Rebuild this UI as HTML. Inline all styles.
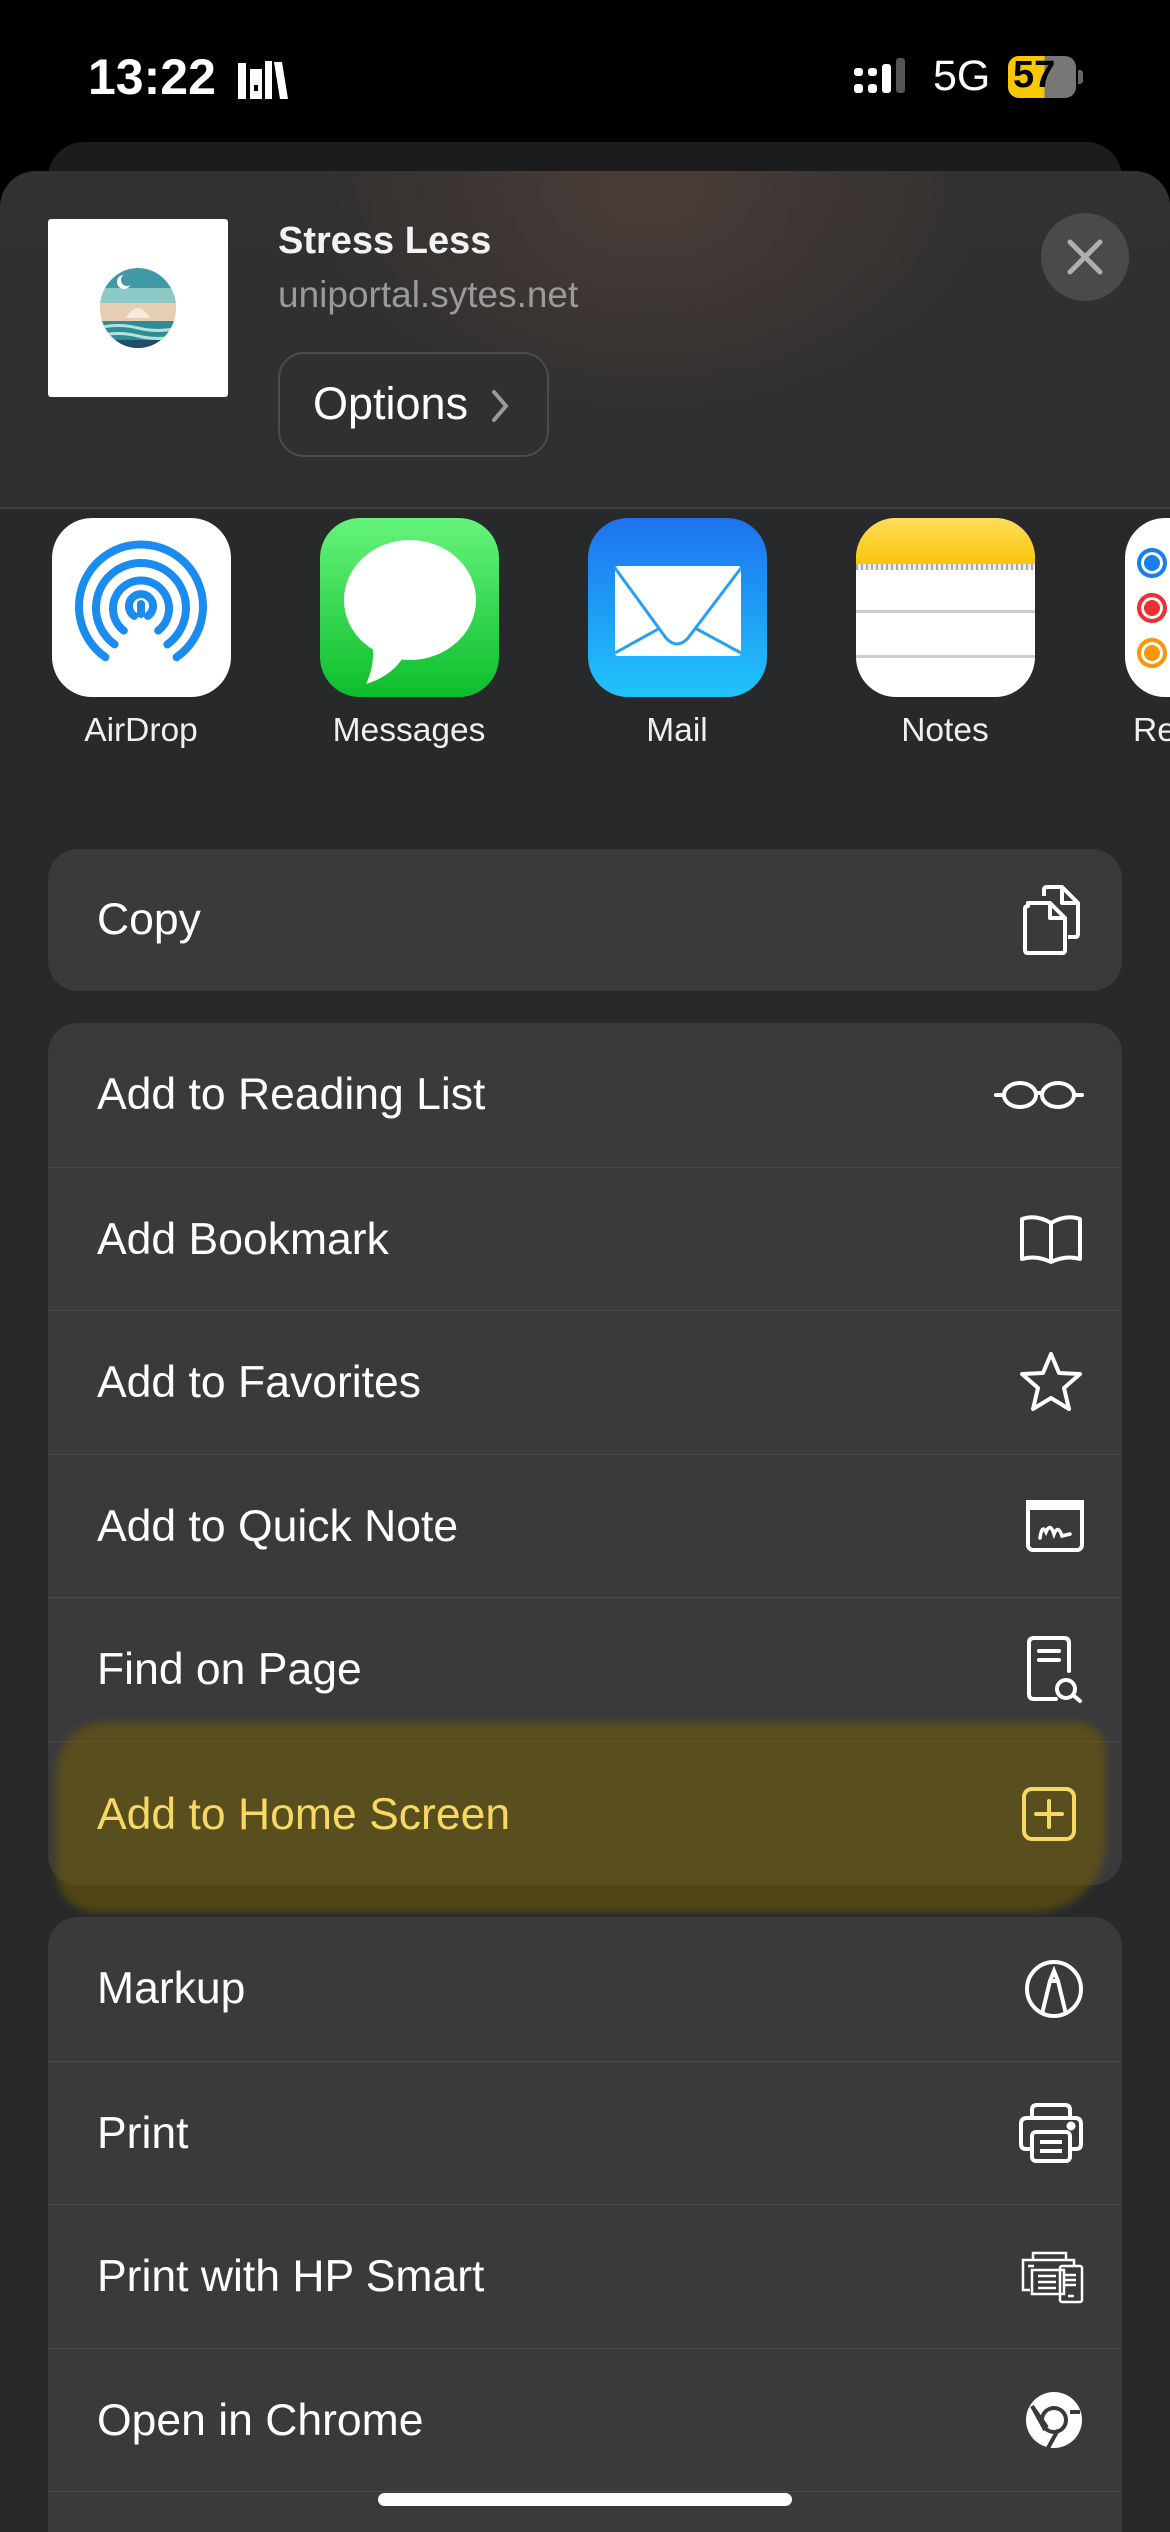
<!DOCTYPE html>
<html><head><meta charset="utf-8"><style>
*{margin:0;padding:0;box-sizing:border-box}
html{width:1170px;height:2532px;overflow:hidden}
body{width:1170px;height:2532px;background:#000;font-family:"Liberation Sans",sans-serif;position:relative;overflow:hidden;color:#fff}
.abs{position:absolute}
.status{top:48px;font-size:50px;font-weight:600;}
.back{left:48px;top:142px;width:1074px;height:80px;background:#1c1c1e;border-radius:36px}
.sheet{left:0;top:171px;width:1170px;height:2361px;border-radius:36px 36px 0 0;background:#28292a}
.hdr{left:0;top:171px;width:1170px;height:337px;background:linear-gradient(#323130,#2e2f2f);border-radius:36px 36px 0 0}
.glow{left:0;top:171px;width:1170px;height:337px;border-radius:36px 36px 0 0;background:radial-gradient(ellipse 330px 230px at 650px 20px,rgba(95,70,62,.55),rgba(0,0,0,0) 100%)}
.group{left:48px;width:1074px;background:#3a3a3c;border-radius:30px;overflow:hidden}
.row{height:143.6px;position:relative;border-top:1px solid #4a4a4c;font-size:44.5px;line-height:143px;padding-left:49px}
.row:first-child{border-top:none}
.row svg{position:absolute;right:38px;top:50%;transform:translateY(-50%)}
.lbl{font-size:33.5px;color:#f0f0f0;text-align:center;width:240px}
.app{width:179px;height:179px;border-radius:40px;overflow:hidden}
</style></head><body>
<div class="abs status" style="left:88px">13:22</div>
<svg class="abs" style="left:236px;top:59px" width="52" height="40" viewBox="0 0 52 40"><rect x="2" y="4" width="8" height="36" fill="#fff"/><rect x="14" y="10" width="12" height="30" fill="#fff"/><rect x="18" y="26" width="4" height="6" fill="#000"/><rect x="29" y="2" width="7" height="38" fill="#fff"/><path d="M38 3 L46 3 L52 40 L44 40Z" fill="#fff"/></svg>
<svg class="abs" style="left:854px;top:58px" width="60" height="42" viewBox="0 0 60 42"><rect x="0" y="10" width="9" height="8" rx="3" fill="#fff"/><rect x="0" y="26" width="9" height="9" rx="3" fill="#fff"/><rect x="14" y="10" width="9" height="8" rx="3" fill="#fff"/><rect x="14" y="26" width="9" height="9" rx="3" fill="#fff"/><rect x="28" y="6" width="9" height="29" rx="3" fill="#fff"/><rect x="42" y="0" width="9" height="35" rx="3" fill="#555"/></svg>
<div class="abs" style="left:933px;top:52px;font-size:43px;font-weight:500">5G</div>
<div class="abs" style="left:1008px;top:56px;width:68px;height:42px;border-radius:11px;background:linear-gradient(90deg,#f7c800 0 54%,#777 54%);"></div>
<div class="abs" style="left:1078px;top:70px;width:5px;height:14px;border-radius:0 3px 3px 0;background:#666"></div>
<div class="abs" style="left:1013px;top:54px;font-size:38px;font-weight:700;color:#000">57</div>
<div class="abs back"></div>
<div class="abs sheet"></div>
<div class="abs hdr"></div>
<div class="abs glow"></div>
<div class="abs" style="left:0;top:507px;width:1170px;height:2px;background:#3b3b3c"></div>
<div class="abs" style="left:48px;top:219px;width:180px;height:178px;background:#fff;border-radius:3px"></div>
<svg class="abs" style="left:98px;top:268px" width="80" height="80" viewBox="0 0 80 80"><defs><clipPath id="c"><ellipse cx="40" cy="40" rx="38" ry="40"/></clipPath></defs><g clip-path="url(#c)"><rect width="80" height="40" fill="#3f9aa6"/><rect y="20" width="80" height="15" fill="#8cc9c7"/><rect y="35" width="80" height="18" fill="#e8cdb5"/><rect y="53" width="80" height="27" fill="#2f8b94"/><path d="M0 60 Q20 55 40 60 T80 60 M0 68 Q20 63 40 68 T80 68" stroke="#b5e0dc" stroke-width="3" fill="none"/><rect y="72" width="80" height="8" fill="#1e4e6b"/><path d="M28 50 Q40 30 52 50Z" fill="#f7e9dc"/><circle cx="26" cy="14" r="7" fill="#fff"/><circle cx="29" cy="12" r="6" fill="#3f9aa6"/></g></svg>
<div class="abs" style="left:278px;top:220px;font-size:38px;font-weight:700;color:#f2f2f2">Stress Less</div>
<div class="abs" style="left:278px;top:274px;font-size:37px;color:#9a9a9a">uniportal.sytes.net</div>
<div class="abs" style="left:278px;top:352px;width:271px;height:105px;border:2px solid #4c4c4c;border-radius:26px;background:#2f302f"></div>
<div class="abs" style="left:313px;top:378px;font-size:45px;color:#fff">Options</div>
<svg class="abs" style="left:490px;top:389px" width="20" height="34" viewBox="0 0 20 34"><path d="M4 3 L16 17 L4 31" stroke="#9a9a9a" stroke-width="4" fill="none" stroke-linecap="round"/></svg>
<div class="abs" style="left:1041px;top:213px;width:88px;height:88px;border-radius:50%;background:#4a4a4a"></div>
<svg class="abs" style="left:1065px;top:237px" width="40" height="40" viewBox="0 0 40 40"><path d="M5 5L35 35M35 5L5 35" stroke="#b0b0b0" stroke-width="5" stroke-linecap="round"/></svg>

<!-- apps -->
<div class="abs app" style="left:52px;top:518px;background:#fff"><svg width="179" height="179" viewBox="0 0 179 179" fill="none" stroke="#1a8cf0" stroke-width="8" stroke-linecap="round">
<path d="M82.1 97.9 A12 12 0 1 1 95.9 97.9"/>
<path d="M71.8 112.6 A28 28 0 1 1 106.2 112.6"/>
<path d="M62.6 126.4 A45 45 0 1 1 115.4 126.4"/>
<path d="M53.4 139.2 A62 62 0 1 1 124.6 139.2"/>
<path d="M89 86 L89 96"/></svg></div>
<div class="abs app" style="left:320px;top:518px;background:linear-gradient(#66f47b,#0dbd2c)"><svg width="179" height="179" viewBox="0 0 179 179"><ellipse cx="90" cy="82" rx="66" ry="60" fill="#fff"/><path d="M52 120 Q56 145 46 166 Q72 158 84 138Z" fill="#fff"/></svg></div>
<div class="abs app" style="left:588px;top:518px;background:linear-gradient(#1e72ee,#1fc4fb)"><svg width="179" height="179" viewBox="0 0 179 179"><rect x="27" y="48" width="126" height="90" rx="3" fill="#fff"/><path d="M27 50 L78 120 Q89 132 100 120 L153 50 M27 135 L72 110 M153 135 L107 110" stroke="#25a0f4" stroke-width="3" fill="none"/></svg></div>
<div class="abs app" style="left:856px;top:518px;background:#fff"><div style="height:46px;background:linear-gradient(#fedd5a,#fcc50b)"></div><div style="height:6px;background:repeating-linear-gradient(90deg,#aaa 0 2px,#eee 2px 5px)"></div><div style="position:absolute;top:92px;left:0;width:179px;height:3px;background:#ccc"></div><div style="position:absolute;top:137px;left:0;width:179px;height:3px;background:#ccc"></div></div>
<div class="abs app" style="left:1125px;top:518px;background:#fff"><div style="position:absolute;left:12px;top:30px;width:30px;height:30px;border-radius:50%;border:4px solid #1a7ff0;background:#1a7ff0;box-shadow:inset 0 0 0 3px #fff"></div><div style="position:absolute;left:12px;top:75px;width:30px;height:30px;border-radius:50%;border:4px solid #f03030;background:#f03030;box-shadow:inset 0 0 0 3px #fff"></div><div style="position:absolute;left:12px;top:120px;width:30px;height:30px;border-radius:50%;border:4px solid #f7980a;background:#f7980a;box-shadow:inset 0 0 0 3px #fff"></div></div>
<div class="abs lbl" style="left:21px;top:712px">AirDrop</div>
<div class="abs lbl" style="left:289px;top:712px">Messages</div>
<div class="abs lbl" style="left:557px;top:712px">Mail</div>
<div class="abs lbl" style="left:825px;top:712px">Notes</div>
<div class="abs lbl" style="left:1104px;top:712px;text-align:left;padding-left:29px">Re</div>

<div class="abs group" style="top:849px;height:142px"><div class="row" style="height:142px;line-height:142px">Copy<svg width="62" height="72" viewBox="0 0 62 72" fill="none" stroke="#fff" stroke-width="4" stroke-linejoin="round"><path d="M22 12 V6 Q22 3 25 3 H40 L56 19 V50 Q56 53 53 53 H46"/><path d="M40 3 V19 H56"/><path d="M6 22 Q3 22 3 25 V66 Q3 69 6 69 H40 Q43 69 43 66 V34 L28 19 H6Z"/><path d="M28 19 V34 H43"/></svg></div></div>

<div class="abs group" style="top:1023px;height:862px">
<div class="row">Add to Reading List<svg width="90" height="30" viewBox="0 0 90 30" fill="none" stroke="#fff" stroke-width="4"><ellipse cx="26" cy="15" rx="16" ry="12"/><ellipse cx="64" cy="15" rx="16" ry="12"/><path d="M42 13 H48 M2 15 H10 M80 15 H88" stroke-linecap="round"/></svg></div>
<div class="row">Add Bookmark<svg width="66" height="52" viewBox="0 0 66 52" fill="none" stroke="#fff" stroke-width="4" stroke-linejoin="round"><path d="M33 10 Q18 1 4 6 V46 Q18 42 33 49 Q48 42 62 46 V6 Q48 1 33 10 V49"/></svg></div>
<div class="row">Add to Favorites<svg width="66" height="62" viewBox="0 0 66 62" fill="none" stroke="#fff" stroke-width="4" stroke-linejoin="round"><path d="M33 3 L41 22 L62 23 L46 37 L51 58 L33 47 L15 58 L20 37 L4 23 L25 22Z"/></svg></div>
<div class="row">Add to Quick Note<svg width="58" height="52" viewBox="0 0 58 52" fill="none" stroke="#fff" stroke-width="4"><rect x="2" y="2" width="54" height="48" rx="5"/><rect x="2" y="2" width="54" height="6" fill="#fff"/><path d="M14 38 Q16 24 20 32 Q24 22 28 34 Q32 24 36 36 L44 34" stroke-width="3.5" stroke-linecap="round"/></svg></div>
<div class="row">Find on Page<svg width="58" height="70" viewBox="0 0 58 70" fill="none" stroke="#fff" stroke-width="4" stroke-linecap="round"><path d="M30 64 H8 Q3 64 3 59 V8 Q3 3 8 3 H38 Q43 3 43 8 V36"/><path d="M13 16 H33 M13 25 H33"/><circle cx="40" cy="54" r="9"/><path d="M47 60 L54 66"/></svg></div>
<div class="row"></div>
</div>
<!-- highlight -->
<div class="abs" style="left:56px;top:1722px;width:1050px;height:190px;background:rgba(118,98,0,.5);border-radius:50px 30px 70px 40px;filter:blur(4px)"></div>
<div class="abs" style="left:97px;top:1790px;font-size:44.5px;color:#f6d862">Add to Home Screen</div>
<svg class="abs" style="left:1021px;top:1786px" width="56" height="56" viewBox="0 0 56 56" fill="none" stroke="#f6d862" stroke-width="4"><rect x="3" y="3" width="50" height="50" rx="8"/><path d="M28 15 V41 M15 28 H41" stroke-linecap="round"/></svg>

<div class="abs group" style="top:1917px;height:615px;border-radius:30px 30px 0 0">
<div class="row">Markup<svg width="60" height="60" viewBox="0 0 60 60" fill="none" stroke="#fff" stroke-width="4"><circle cx="30" cy="30" r="27"/><path d="M18 55 L26 22 L30 12 L34 22 L42 55 M26 22 H34"/></svg></div>
<div class="row">Print<svg width="66" height="62" viewBox="0 0 66 62" fill="none" stroke="#fff" stroke-width="4"><path d="M14 16 V8 Q14 3 19 3 H47 Q52 3 52 8 V16"/><path d="M14 47 H8 Q3 47 3 42 V22 Q3 16 9 16 H57 Q63 16 63 22 V42 Q63 47 58 47 H52"/><rect x="14" y="30" width="38" height="29" rx="4"/><path d="M22 40 H44 M22 49 H44"/><circle cx="53" cy="24" r="2.5" fill="#fff"/></svg></div>
<div class="row">Print with HP Smart<svg width="66" height="56" viewBox="0 0 66 56" fill="none" stroke="#fff" stroke-width="2.5"><path d="M15 12 V5 H48 V12"/><path d="M12 42 H5 V12 H56 V18"/><rect x="14" y="22" width="32" height="24"/><rect x="42" y="18" width="22" height="36" rx="2"/><path d="M10 18 H16 M20 28 H38 M20 34 H38 M20 40 H38 M47 27 H58 M47 32 H58 M47 37 H58 M50 48 H56"/></svg></div>
<div class="row">Open in Chrome<svg width="60" height="60" viewBox="0 0 60 60"><circle cx="30" cy="30" r="28" fill="#fff"/><circle cx="30" cy="30" r="14" fill="#3a3a3c"/><circle cx="30" cy="30" r="10" fill="#fff"/><path d="M8 16 L20 38 L22 36Z M46 22 L56 22 M34 40 L24 58" stroke="#3a3a3c" stroke-width="4"/></svg></div>
<div class="row"></div>
</div>
<div class="abs" style="left:378px;top:2493px;width:414px;height:13px;border-radius:7px;background:#fff"></div>
</body></html>
